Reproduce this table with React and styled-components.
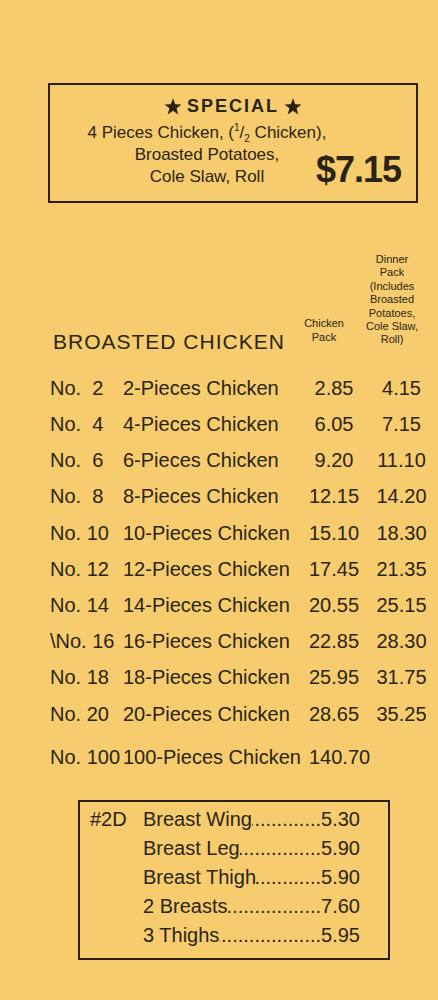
import React from 'react'
import styled, { createGlobalStyle } from 'styled-components'

const GlobalStyle = createGlobalStyle`
  html, body {
    margin: 0;
    background: #f6cc6e;
  }
  body {
    font-family: "Liberation Sans", Arial, sans-serif;
    color: #2a2417;
  }
`

const Sheet = styled.div`
  width: 438px;
  min-height: 1000px;
  padding-top: 83px;
  box-sizing: border-box;
`

const SpecialBox = styled.div`
  margin-left: 48px;
  width: 370px;
  height: 120px;
  box-sizing: border-box;
  border: 2px solid #2a2113;
  padding-top: 10px;
`

const SpecialTitle = styled.div`
  display: flex;
  justify-content: center;
  align-items: center;
  gap: 5px;
  font-weight: bold;
  font-size: 18px;
  letter-spacing: 2px;
  line-height: 22px;
`

const SpecialBody = styled.div`
  display: flex;
  align-items: flex-end;
  margin-top: 5px;
`

const SpecialDesc = styled.div`
  width: 240px;
  margin-left: 37px;
  text-align: center;
  font-size: 17px;
  line-height: 22px;
  sup, sub {
    font-size: 10px;
    line-height: 0;
  }
`

const BigPrice = styled.div`
  margin-left: -11px;
  font-weight: bold;
  font-size: 36px;
  letter-spacing: -1px;
  line-height: 36px;
`

const Header = styled.div`
  display: flex;
  align-items: flex-end;
  margin-top: 50px;
  padding-left: 53px;
`

const SectionTitle = styled.div`
  width: 251px;
  font-size: 21px;
  letter-spacing: 1px;
  line-height: 22px;
`

const ColHead = styled.div`
  width: ${({ w }) => w}px;
  margin-left: ${({ ml }) => ml || 0}px;
  margin-bottom: ${({ mb }) => mb}px;
  text-align: center;
  font-size: 11px;
  line-height: ${({ lh }) => lh}px;
`

const Rows = styled.div`
  margin-top: 17px;
  padding-left: 50px;
`

const Row = styled.div`
  display: grid;
  grid-template-columns: 73px 186px 50px 85px;
  height: 36.2px;
  line-height: 36px;
  font-size: 20px;
  margin-top: ${({ extra }) => extra || 0}px;
  white-space: pre;
`

const Price = styled.span`
  text-align: ${({ loose }) => loose ? 'left' : 'center'};
`

const ComboBox = styled.div`
  margin: 25px 0 0 78px;
  width: 312px;
  height: 160px;
  box-sizing: border-box;
  border: 2px solid #2a2113;
  padding: 3.5px 28px 0 10px;
  display: grid;
  grid-template-columns: 53px minmax(0, 1fr);
  font-size: 20px;
`

const ComboCode = styled.div`
  line-height: 29px;
`

const ComboList = styled.div`
  display: flex;
  flex-direction: column;
  min-width: 0;
`

const ComboItem = styled.div`
  display: flex;
  height: 29px;
  line-height: 29px;
  min-width: 0;
`

const Leader = styled.span`
  flex: 1;
  min-width: 0;
  overflow: hidden;
  white-space: nowrap;
  direction: rtl;
  &::before {
    content: '..............................................';
  }
`

const Star = () => (
  <svg width="18" height="17" viewBox="0 0 24 23">
    <polygon
      points="12,0.5 15,8.6 23.5,8.8 16.8,14 19.2,22.3 12,17.4 4.8,22.3 7.2,14 0.5,8.8 9,8.6"
      fill="#2a2113"
    />
  </svg>
)

const pieces = [
  ['No.  2', '2-Pieces Chicken', '2.85', '4.15'],
  ['No.  4', '4-Pieces Chicken', '6.05', '7.15'],
  ['No.  6', '6-Pieces Chicken', '9.20', '11.10'],
  ['No.  8', '8-Pieces Chicken', '12.15', '14.20'],
  ['No. 10', '10-Pieces Chicken', '15.10', '18.30'],
  ['No. 12', '12-Pieces Chicken', '17.45', '21.35'],
  ['No. 14', '14-Pieces Chicken', '20.55', '25.15'],
  ['\\No. 16', '16-Pieces Chicken', '22.85', '28.30'],
  ['No. 18', '18-Pieces Chicken', '25.95', '31.75'],
  ['No. 20', '20-Pieces Chicken', '28.65', '35.25'],
]

const combos = [
  ['Breast Wing', '5.30'],
  ['Breast Leg', '5.90'],
  ['Breast Thigh', '5.90'],
  ['2 Breasts', '7.60'],
  ['3 Thighs', '5.95'],
]

export default function App() {
  return (
    <Sheet>
      <GlobalStyle />
      <SpecialBox>
        <SpecialTitle>
          <Star /> SPECIAL <Star />
        </SpecialTitle>
        <SpecialBody>
          <SpecialDesc>
            4 Pieces Chicken, (<sup>1</sup>/<sub>2</sub> Chicken),<br />
            Broasted Potatoes,<br />
            Cole Slaw, Roll
          </SpecialDesc>
          <BigPrice>$7.15</BigPrice>
        </SpecialBody>
      </SpecialBox>

      <Header>
        <SectionTitle>BROASTED CHICKEN</SectionTitle>
        <ColHead w={40} mb={9} lh={14}>Chicken<br />Pack</ColHead>
        <ColHead w={62} ml={17} mb={6} lh={13.4}>
          Dinner<br />Pack<br />(Includes<br />Broasted<br />Potatoes,<br />Cole Slaw,<br />Roll)
        </ColHead>
      </Header>

      <Rows>
        {pieces.map(([no, name, pack, dinner]) => (
          <Row key={no}>
            <span>{no}</span>
            <span>{name}</span>
            <Price>{pack}</Price>
            <Price>{dinner}</Price>
          </Row>
        ))}
        <Row extra={7}>
          <span>No. 100</span>
          <span>100-Pieces Chicken</span>
          <Price loose>140.70</Price>
          <span />
        </Row>
      </Rows>

      <ComboBox>
        <ComboCode>#2D</ComboCode>
        <ComboList>
          {combos.map(([name, price]) => (
            <ComboItem key={name}>
              <span>{name}</span>
              <Leader />
              <span>{price}</span>
            </ComboItem>
          ))}
        </ComboList>
      </ComboBox>
    </Sheet>
  )
}
